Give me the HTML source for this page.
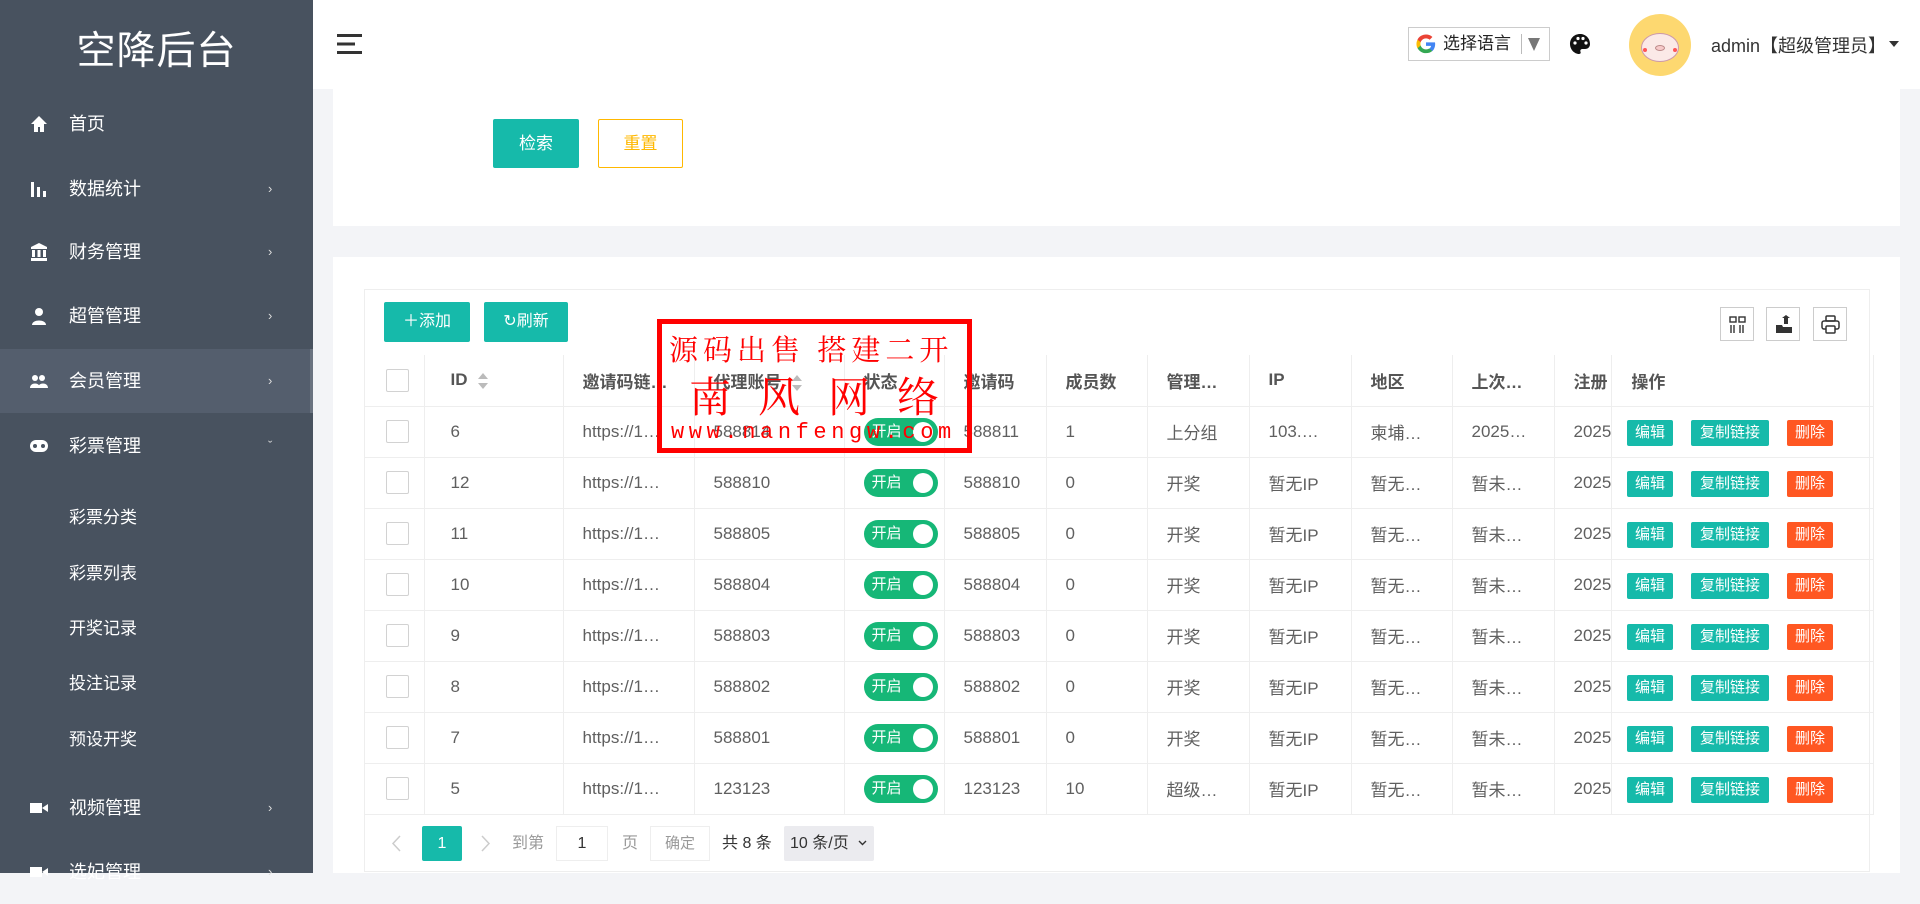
<!DOCTYPE html>
<html><head><meta charset="utf-8">
<style>
*{margin:0;padding:0;box-sizing:border-box}
body{width:1920px;height:873px;overflow:hidden;background:#f3f4f7;font-family:"Liberation Sans","Noto Sans CJK SC",sans-serif;position:relative;color:#5f5f5f}
.abs{position:absolute}
#side{left:0;top:0;width:313px;height:873px;background:#48525f;color:#fff}
.logo{position:absolute;left:0;width:313px;top:20px;text-align:center;font-size:39px;color:#fff;letter-spacing:1px}
.mi{position:absolute;left:0;width:313px;height:64px;line-height:64px;font-size:18px;color:#fff}
.mi .ic{position:absolute;left:30px;top:23px;width:18px;height:18px}
.mi .t{position:absolute;left:69px}
.mi .ar{position:absolute;left:268px;font-size:13px;color:#ddd}
.sub{position:absolute;left:69px;font-size:17px;color:#fff}
#top{left:313px;top:0;width:1607px;height:89px;background:#fff}
.card{background:#fff;position:absolute}
.btn{position:absolute;color:#fff;background:#16baaa;font-size:17px;text-align:center;border-radius:2px}
table{border-collapse:collapse;position:absolute;left:364px;top:355px;table-layout:fixed}
td,th{height:51px;border-bottom:1px solid #eee;border-right:1px solid #eee;text-align:left;padding-left:19px;font-size:17px;white-space:nowrap;overflow:hidden}
th{font-weight:bold;color:#555}
.cb{display:inline-block;width:23px;height:23px;border:1px solid #d2d2d2;border-radius:2px;vertical-align:middle;background:#fff}
.sw{display:inline-block;width:74px;height:28px;border-radius:14px;background:#16b777;color:#fff;font-size:15px;line-height:28px;padding-left:8px;position:relative;vertical-align:middle}
.sw:after{content:"";position:absolute;right:5px;top:4px;width:20px;height:20px;border-radius:50%;background:#fff}
.ob{position:absolute;height:26px;line-height:26px;font-size:15px;color:#fff;text-align:center;border-radius:2px}
.tb{position:absolute;top:307px;width:34px;height:34px;border:1px solid #ccc;background:#fff}
.srt{display:inline-block;vertical-align:middle;margin-left:10px}
.wm{position:absolute;font-family:'Noto Serif CJK SC',serif;color:#f00;white-space:nowrap;line-height:1}
</style></head><body>
<div id="side" class="abs">
<div class="logo">空降后台</div>
<div class="mi" style="top:92px"><svg class="ic" viewBox="0 0 18 18"><path d="M9 1L1 9h3v8h4v-5h2v5h4V9h3z" fill="#fff"/></svg><span class="t">首页</span></div>
<div class="mi" style="top:157px"><svg class="ic" viewBox="0 0 18 18"><rect x="1" y="2" width="3" height="15" fill="#fff"/><rect x="7" y="7" width="3" height="10" fill="#fff"/><rect x="13" y="11" width="3" height="6" fill="#fff"/></svg><span class="t">数据统计</span><span class="ar">›</span></div>
<div class="mi" style="top:220px"><svg class="ic" viewBox="0 0 18 18"><path d="M9 0L1 4v2h16V4z M2 7h3v7H2z M7.5 7h3v7h-3z M13 7h3v7h-3z M1 15h16v3H1z" fill="#fff"/></svg><span class="t">财务管理</span><span class="ar">›</span></div>
<div class="mi" style="top:284px"><svg class="ic" viewBox="0 0 18 18"><circle cx="9" cy="5" r="4" fill="#fff"/><path d="M2 18c0-6 14-6 14 0z" fill="#fff"/></svg><span class="t">超管管理</span><span class="ar">›</span></div>
<div class="mi" style="top:349px;background:#545e6d;border-right:3px solid #6a7380"><svg class="ic" viewBox="0 0 18 18"><circle cx="5" cy="6" r="3" fill="#fff"/><circle cx="12" cy="6" r="3" fill="#fff"/><path d="M0 16c0-6 10-6 10 0z M8 16c0-6 10-6 10 0z" fill="#fff"/></svg><span class="t">会员管理</span><span class="ar">›</span></div>
<div class="mi" style="top:414px"><svg class="ic" viewBox="0 0 18 18"><rect x="0" y="3" width="18" height="12" rx="6" fill="#fff"/><circle cx="5" cy="9" r="2" fill="#48525f"/><circle cx="13" cy="9" r="2" fill="#48525f"/></svg><span class="t">彩票管理</span><span class="ar">ˇ</span></div>
<div class="sub" style="top:503px">彩票分类</div>
<div class="sub" style="top:559px">彩票列表</div>
<div class="sub" style="top:614px">开奖记录</div>
<div class="sub" style="top:669px">投注记录</div>
<div class="sub" style="top:725px">预设开奖</div>
<div class="mi" style="top:776px"><svg class="ic" viewBox="0 0 18 18"><rect x="0" y="4" width="12" height="10" fill="#fff"/><path d="M12 9l6-4v8z" fill="#fff"/></svg><span class="t">视频管理</span><span class="ar">›</span></div>
<div class="mi" style="top:840px"><svg class="ic" viewBox="0 0 18 18"><rect x="0" y="4" width="12" height="10" fill="#fff"/><path d="M12 9l6-4v8z" fill="#fff"/></svg><span class="t">选妃管理</span><span class="ar">›</span></div>
</div>
<div id="top" class="abs">
<svg class="abs" style="left:24px;top:34px" width="26" height="20" viewBox="0 0 26 20"><rect y="0" width="25" height="3" fill="#333"/><rect y="8.5" width="18" height="3" fill="#333"/><rect y="17" width="25" height="3" fill="#333"/></svg>
<div class="abs" style="left:1095px;top:27px;width:142px;height:34px;border:1px solid #ccc;background:#fff">
<svg class="abs" style="left:6px;top:5px" width="22" height="22" viewBox="0 0 24 24"><path d="M22 12.2c0-.7-.1-1.4-.2-2H12v3.9h5.6c-.3 1.3-1 2.4-2.1 3.1v2.6h3.4c2-1.8 3.1-4.5 3.1-7.6z" fill="#4285f4"/><path d="M12 22c2.8 0 5.2-.9 6.9-2.5l-3.4-2.6c-.9.6-2.1 1-3.5 1-2.7 0-5-1.8-5.8-4.3H2.7v2.7C4.4 19.7 7.9 22 12 22z" fill="#34a853"/><path d="M6.2 13.6c-.2-.6-.3-1.2-.3-1.8s.1-1.2.3-1.8V7.3H2.7C2 8.7 1.6 10.3 1.6 12s.4 3.3 1.1 4.7z" fill="#fbbc05"/><path d="M12 5.8c1.5 0 2.9.5 4 1.6l3-3C17.2 2.7 14.8 1.7 12 1.7 7.9 1.7 4.4 4 2.7 7.3l3.5 2.7C7 7.6 9.3 5.8 12 5.8z" fill="#ea4335"/></svg>
<span class="abs" style="left:34px;top:5px;font-size:17px;line-height:22px;color:#222">选择语言</span>
<span class="abs" style="left:112px;top:6px;width:1px;height:20px;background:#bbb"></span>
<svg class="abs" style="left:119px;top:10px" width="12" height="13" viewBox="0 0 12 13"><path d="M0 0h12L6 13z" fill="#777"/></svg>
</div>
<svg class="abs" style="left:1256px;top:33px" width="22" height="22" viewBox="0 0 22 22"><path d="M11 1C5 1 1 5.5 1 11s4.5 10 9 10c1.5 0 2-1 1.5-2.2-.6-1.3.3-2.8 1.8-2.8H16c3 0 5-2 5-5C21 5 16.5 1 11 1z" fill="#111"/><circle cx="6" cy="10" r="1.6" fill="#fff"/><circle cx="9" cy="5.5" r="1.6" fill="#fff"/><circle cx="14" cy="5.5" r="1.6" fill="#fff"/><circle cx="17" cy="10" r="1.6" fill="#fff"/></svg>
<div class="abs" style="left:1316px;top:14px;width:62px;height:62px;border-radius:50%;background:#fdd870">
<div class="abs" style="left:12px;top:19px;width:38px;height:29px;border-radius:50%;background:#fbe9e7;border:1px solid #c9a"></div>
<div class="abs" style="left:26px;top:31px;width:10px;height:6px;border-radius:50%;border:1px solid #b88;background:#f7c9c9"></div>
<div class="abs" style="left:14px;top:34px;width:4px;height:4px;border-radius:50%;background:#f55"></div>
<div class="abs" style="left:44px;top:34px;width:4px;height:4px;border-radius:50%;background:#f55"></div>
</div>
<span class="abs" style="left:1398px;top:32px;font-size:18px;color:#333">admin【超级管理员】</span>
<span class="abs" style="left:1576px;top:41px;width:0;height:0;border-left:5px solid transparent;border-right:5px solid transparent;border-top:6px solid #333"></span>
</div>
<div class="card" style="left:333px;top:89px;width:1567px;height:137px"></div>
<div class="btn" style="left:493px;top:119px;width:86px;height:49px;line-height:49px">检索</div>
<div class="btn" style="left:598px;top:119px;width:85px;height:49px;line-height:47px;background:#fff;border:1px solid #ffb800;color:#ffb800">重置</div>
<div class="card" style="left:333px;top:257px;width:1567px;height:616px"></div>
<div class="abs" style="left:364px;top:289px;width:1506px;height:583px;border:1px solid #eee;background:#fff"></div>
<div class="btn" style="left:384px;top:302px;width:86px;height:40px;line-height:40px;font-size:16px">＋添加</div>
<div class="btn" style="left:484px;top:302px;width:84px;height:40px;line-height:40px;font-size:16px">↻刷新</div>
<div class="tb" style="left:1720px"><svg class="abs" style="left:8px;top:8px" width="17" height="17" viewBox="0 0 17 17" fill="none" stroke="#333" stroke-width="1.4"><rect x="1" y="1" width="6" height="5"/><rect x="10" y="1" width="6" height="5"/><path d="M2 9v8M5 9v8M11 9v8M14 9v8"/></svg></div>
<div class="tb" style="left:1766px"><svg class="abs" style="left:8px;top:7px" width="18" height="18" viewBox="0 0 18 18"><path d="M1 10h6l1 2h9v6H1z" fill="#333"/><path d="M9 9V3h-2l4-3 4 3h-2v6z" fill="#333"/></svg></div>
<div class="tb" style="left:1813px"><svg class="abs" style="left:7px;top:7px" width="19" height="19" viewBox="0 0 19 19" fill="none" stroke="#333" stroke-width="1.5"><rect x="5" y="1" width="9" height="5" rx="1"/><rect x="1" y="6" width="17" height="8" rx="2"/><rect x="5" y="11" width="9" height="7" rx="1" fill="#fff"/></svg></div>
<table>
<colgroup><col style="width:60px"><col style="width:139px"><col style="width:131px"><col style="width:150px"><col style="width:100px"><col style="width:102px"><col style="width:101px"><col style="width:102px"><col style="width:102px"><col style="width:101px"><col style="width:102px"><col style="width:53px"><col style="width:262px"></colgroup>
<tr><th style="padding-left:22px"><span class="cb"></span></th><th style="padding-left:26px">ID<svg class="srt" width="10" height="16" viewBox="0 0 10 16"><path d="M5 0l5 6H0zM5 16l5-6H0z" fill="#bbb"/></svg></th><th>邀请码链…</th><th>代理账号<svg class="srt" width="10" height="16" viewBox="0 0 10 16"><path d="M5 0l5 6H0zM5 16l5-6H0z" fill="#bbb"/></svg></th><th>状态</th><th>邀请码</th><th>成员数</th><th>管理…</th><th>IP</th><th>地区</th><th>上次…</th><th>注册</th><th style="box-shadow:-6px 0 8px -4px rgba(0,0,0,.12)">操作</th></tr>
<tr><td style="padding-left:22px"><span class="cb"></span></td><td style="padding-left:26px">6</td><td>https://1…</td><td>588814</td><td><span class="sw">开启</span></td><td>588811</td><td>1</td><td>上分组</td><td>103.…</td><td>柬埔…</td><td>2025…</td><td>2025</td><td></td></tr>
<tr><td style="padding-left:22px"><span class="cb"></span></td><td style="padding-left:26px">12</td><td>https://1…</td><td>588810</td><td><span class="sw">开启</span></td><td>588810</td><td>0</td><td>开奖</td><td>暂无IP</td><td>暂无…</td><td>暂未…</td><td>2025</td><td></td></tr>
<tr><td style="padding-left:22px"><span class="cb"></span></td><td style="padding-left:26px">11</td><td>https://1…</td><td>588805</td><td><span class="sw">开启</span></td><td>588805</td><td>0</td><td>开奖</td><td>暂无IP</td><td>暂无…</td><td>暂未…</td><td>2025</td><td></td></tr>
<tr><td style="padding-left:22px"><span class="cb"></span></td><td style="padding-left:26px">10</td><td>https://1…</td><td>588804</td><td><span class="sw">开启</span></td><td>588804</td><td>0</td><td>开奖</td><td>暂无IP</td><td>暂无…</td><td>暂未…</td><td>2025</td><td></td></tr>
<tr><td style="padding-left:22px"><span class="cb"></span></td><td style="padding-left:26px">9</td><td>https://1…</td><td>588803</td><td><span class="sw">开启</span></td><td>588803</td><td>0</td><td>开奖</td><td>暂无IP</td><td>暂无…</td><td>暂未…</td><td>2025</td><td></td></tr>
<tr><td style="padding-left:22px"><span class="cb"></span></td><td style="padding-left:26px">8</td><td>https://1…</td><td>588802</td><td><span class="sw">开启</span></td><td>588802</td><td>0</td><td>开奖</td><td>暂无IP</td><td>暂无…</td><td>暂未…</td><td>2025</td><td></td></tr>
<tr><td style="padding-left:22px"><span class="cb"></span></td><td style="padding-left:26px">7</td><td>https://1…</td><td>588801</td><td><span class="sw">开启</span></td><td>588801</td><td>0</td><td>开奖</td><td>暂无IP</td><td>暂无…</td><td>暂未…</td><td>2025</td><td></td></tr>
<tr><td style="padding-left:22px"><span class="cb"></span></td><td style="padding-left:26px">5</td><td>https://1…</td><td>123123</td><td><span class="sw">开启</span></td><td>123123</td><td>10</td><td>超级…</td><td>暂无IP</td><td>暂无…</td><td>暂未…</td><td>2025</td><td></td></tr>
</table>
<div id="ops"></div>
<script>
var h='';for(var i=0;i<8;i++){var y=420+i*51;
h+='<div class="ob" style="left:1627px;top:'+y+'px;width:46px;background:#16baaa">编辑</div>'+
'<div class="ob" style="left:1691px;top:'+y+'px;width:78px;background:#16baaa">复制链接</div>'+
'<div class="ob" style="left:1787px;top:'+y+'px;width:46px;background:#ff5722">删除</div>';}
document.getElementById('ops').innerHTML=h;
</script>
<svg class="abs" style="left:391px;top:835px" width="10" height="17" viewBox="0 0 10 17"><path d="M9 1L2 8.5 9 16" fill="none" stroke="#ccc" stroke-width="1.5"/></svg>
<div class="abs" style="left:422px;top:826px;width:40px;height:35px;background:#16baaa;color:#fff;text-align:center;line-height:35px;font-size:16px;border-radius:2px">1</div>
<svg class="abs" style="left:481px;top:835px" width="10" height="17" viewBox="0 0 10 17"><path d="M1 1l7 7.5L1 16" fill="none" stroke="#ccc" stroke-width="1.5"/></svg>
<div class="abs" style="left:512px;top:826px;font-size:16px;color:#999;line-height:35px">到第</div>
<div class="abs" style="left:556px;top:826px;width:52px;height:35px;border:1px solid #eee;text-align:center;line-height:33px;font-size:16px;color:#333">1</div>
<div class="abs" style="left:622px;top:826px;font-size:16px;color:#999;line-height:35px">页</div>
<div class="abs" style="left:650px;top:826px;width:60px;height:35px;border:1px solid #eee;text-align:center;line-height:33px;font-size:15px;color:#999">确定</div>
<div class="abs" style="left:722px;top:826px;font-size:16px;color:#333;line-height:35px">共 8 条</div>
<div class="abs" style="left:784px;top:826px;width:90px;height:35px;background:#ebebef;border-radius:2px;font-size:16px;color:#333;line-height:35px;padding-left:6px">10 条/页</div>
<svg class="abs" style="left:858px;top:840px" width="9" height="6" viewBox="0 0 9 6"><path d="M1 1l3.5 3.5L8 1" fill="none" stroke="#333" stroke-width="1.4"/></svg>
<div class="abs" style="left:657px;top:319px;width:315px;height:134px;border:5px solid #f00"></div>
<div class="wm" style="left:669px;top:334px;font-size:29px;letter-spacing:5px">源码出售 搭建二开</div>
<div class="wm" style="left:689px;top:374px;font-size:42px">南</div>
<div class="wm" style="left:758px;top:374px;font-size:42px">风</div>
<div class="wm" style="left:828px;top:374px;font-size:42px">网</div>
<div class="wm" style="left:897px;top:374px;font-size:42px">络</div>
<div class="wm" style="left:671px;top:422px;font-family:'Liberation Mono',monospace;font-size:22px;letter-spacing:4.6px">www.nanfengw.com</div>
</body></html>
